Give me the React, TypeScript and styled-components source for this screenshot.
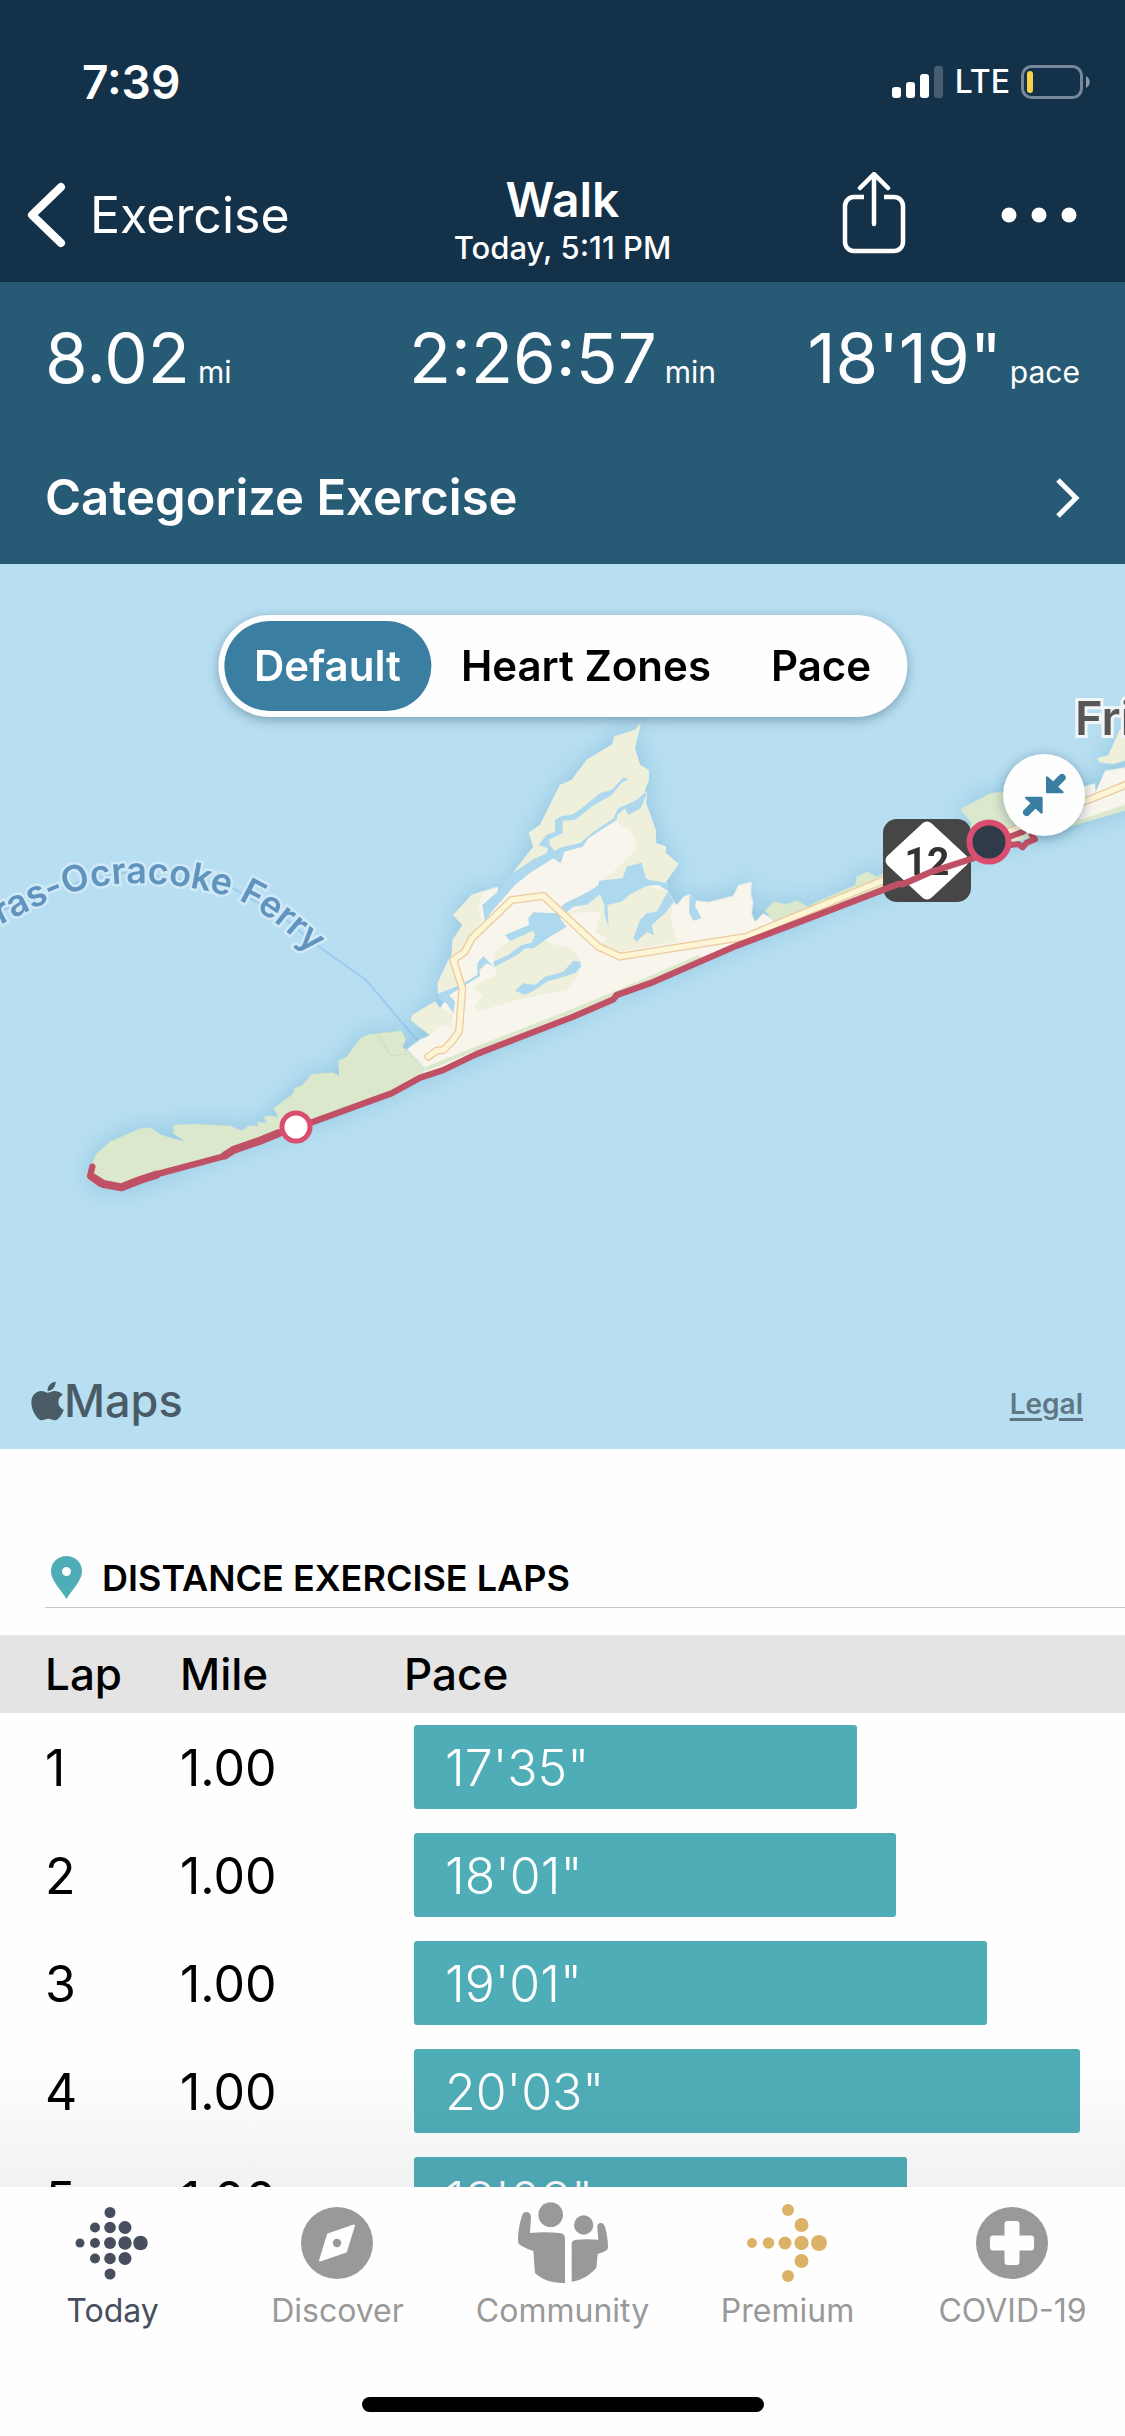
import React from "react";
import styled, { createGlobalStyle } from "styled-components";
import { FaApple } from "react-icons/fa";

const GlobalStyle = createGlobalStyle`
  * { box-sizing: border-box; }
  html, body, #root { height: 100%; }
  body {
    margin: 0;
    background: #fefefe;
    color: #000;
    font-family: Inter, "Noto Sans", sans-serif;
    -webkit-font-smoothing: antialiased;
  }
  button { font: inherit; color: inherit; background: none; border: 0; padding: 0; margin: 0; cursor: pointer; }
`;

const Screen = styled.div`
  display: flex;
  flex-direction: column;
  height: 100vh;
  overflow: hidden;
`;

const Header = styled.header`
  flex: none;
  background: #14314a;
  color: #fff;
`;

const StatusBar = styled.div`
  display: flex;
  align-items: center;
  justify-content: space-between;
  height: 164px;
  padding: 0 34px 0 82px;
`;

const Clock = styled.time`
  font-size: 46px;
  line-height: 52px;
  font-weight: 600;
`;

const StatusIcons = styled.div`
  display: flex;
  align-items: center;
  gap: 11px;
  font-size: 32px;
  line-height: 40px;
  font-weight: 500;
  svg { display: block; }
`;

const NavBar = styled.nav`
  display: grid;
  grid-template-columns: 1fr auto 1fr;
  align-items: start;
  height: 118px;
  padding: 0 26px;
`;

const BackButton = styled.button`
  display: flex;
  align-items: center;
  gap: 22px;
  height: 102px;
  justify-self: start;
  font-size: 50px;
  line-height: 60px;
`;

const Title = styled.h1`
  margin: 8px 0 0;
  text-align: center;
  font-size: 48px;
  line-height: 56px;
  font-weight: 600;
`;

const Subtitle = styled.p`
  margin: 2px 0 0;
  text-align: center;
  font-size: 31px;
  line-height: 36px;
  font-weight: 500;
`;

const NavActions = styled.div`
  display: flex;
  align-items: center;
  justify-content: flex-end;
  gap: 95px;
  height: 102px;
  padding-right: 22px;
  svg { display: block; }
`;

const Summary = styled.section`
  background: #275b75;
  color: #fff;
`;

const Metrics = styled.div`
  display: grid;
  grid-template-columns: 1fr auto 1fr;
  height: 150px;
  padding: 34px 45px 0;
`;

const Metric = styled.div`
  display: flex;
  align-items: baseline;
  justify-content: flex-start;
  gap: 8px;
  &:last-child { justify-content: flex-end; }
`;

const MetricValue = styled.span`
  font-size: 69px;
  line-height: 84px;
  font-weight: 400;
`;

const MetricUnit = styled.span`
  font-size: 30px;
  line-height: 36px;
  font-weight: 400;
`;

const CategorizeButton = styled.button`
  display: flex;
  align-items: center;
  justify-content: space-between;
  width: 100%;
  height: 132px;
  padding: 0 45px;
  font-size: 49px;
  line-height: 60px;
  font-weight: 600;
`;

const Content = styled.main`
  position: relative;
  flex: 1;
  min-height: 0;
  overflow: hidden;
`;

const ScrollFade = styled.div`
  position: absolute;
  left: 0;
  right: 0;
  bottom: 0;
  height: 120px;
  pointer-events: none;
  background: linear-gradient(rgba(40, 40, 70, 0), rgba(40, 40, 70, 0.06));
`;

const MapPanel = styled.section`
  position: relative;
  background: #b8dff1;
`;

const MapDrawing = styled.svg`
  display: block;
  width: 100%;
  height: auto;
`;

const Segments = styled.div`
  position: absolute;
  top: 51px;
  left: 50%;
  transform: translateX(-50%);
  display: flex;
  padding: 6px;
  border-radius: 51px;
  background: #fefefe;
  box-shadow: 0 3px 12px rgba(0, 40, 70, 0.35);
`;

const Segment = styled.button<{ $active?: boolean }>`
  height: 90px;
  padding: 0 30px;
  border-radius: 45px;
  font-size: 42px;
  line-height: 48px;
  font-weight: 600;
  white-space: nowrap;
  background: ${(p) => (p.$active ? "#3a7ea2" : "transparent")};
  color: ${(p) => (p.$active ? "#fff" : "#000")};
`;

const CollapseButton = styled.button`
  position: absolute;
  top: 190px;
  right: 40px;
  display: grid;
  place-items: center;
  width: 82px;
  height: 82px;
  border-radius: 50%;
  background: #fefefe;
  box-shadow: 0 2px 12px rgba(0, 40, 70, 0.35);
`;

const MapCredits = styled.div`
  position: absolute;
  left: 0;
  right: 0;
  bottom: 18px;
  display: flex;
  align-items: center;
  justify-content: space-between;
  padding: 0 42px 0 31px;
  color: #4a5b66;
`;

const MapBrand = styled.span`
  display: flex;
  align-items: center;
  font-size: 45px;
  line-height: 60px;
  font-weight: 500;
  svg { width: 33px; height: 44px; }
`;

const LegalLink = styled.a`
  padding-top: 6px;
  color: #5f7785;
  font-size: 28px;
  line-height: 36px;
  font-weight: 600;
  text-underline-offset: 4px;
  text-decoration-thickness: 3px;
`;

const SectionTitle = styled.h2`
  display: flex;
  align-items: center;
  gap: 20px;
  height: 60px;
  margin: 99px 0 27px 45px;
  padding-left: 6px;
  border-bottom: 1px solid #c8c8c8;
  font-size: 36px;
  line-height: 44px;
  font-weight: 600;
`;

const LapTable = styled.table`
  width: 100%;
  border-collapse: collapse;
  table-layout: fixed;
`;

const LapHead = styled.th<{ $width?: number }>`
  width: ${(p) => (p.$width ? `${p.$width}px` : "auto")};
  height: 78px;
  padding: 0;
  background: #e4e4e4;
  text-align: left;
  font-size: 44px;
  line-height: 52px;
  font-weight: 500;
  &:first-child { padding-left: 45px; }
`;

const LapCell = styled.td`
  height: 108px;
  padding: 2px 0 0;
  font-size: 50px;
  line-height: 60px;
  &:first-child { padding-left: 45px; }
`;

const PaceCell = styled(LapCell)`
  padding: 0 45px 0 10px;
`;

const PaceBar = styled.div`
  display: flex;
  align-items: center;
  height: 84px;
  padding: 2px 0 0 31px;
  border-radius: 3px;
  background: #4fadb7;
  color: #fff;
  font-weight: 300;
`;

const TabBar = styled.nav`
  flex: none;
  display: grid;
  grid-template-columns: repeat(5, 1fr);
  background: #fefefe;
`;

const Tab = styled.button<{ $active?: boolean }>`
  display: flex;
  flex-direction: column;
  align-items: center;
  height: 210px;
  padding-top: 8px;
  gap: 2px;
  color: ${(p) => (p.$active ? "#474f5e" : "#999")};
  font-size: 32px;
  line-height: 36px;
  font-weight: 400;
  svg { display: block; }
`;

const HomeIndicator = styled.div`
  flex: none;
  width: 402px;
  height: 15px;
  margin: 0 auto 24px;
  border-radius: 8px;
  background: #000;
`;

type Lap = { lap: number; mile: string; minutes: number; seconds: number };

const laps: Lap[] = [
  { lap: 1, mile: "1.00", minutes: 17, seconds: 35 },
  { lap: 2, mile: "1.00", minutes: 18, seconds: 1 },
  { lap: 3, mile: "1.00", minutes: 19, seconds: 1 },
  { lap: 4, mile: "1.00", minutes: 20, seconds: 3 },
  { lap: 5, mile: "1.00", minutes: 18, seconds: 8 },
];

const SLOWEST = 1203;
const BASELINE = 761;

const barWidth = (l: Lap) =>
  `${((l.minutes * 60 + l.seconds - BASELINE) / (SLOWEST - BASELINE)) * 100}%`;

const paceText = (l: Lap) => `${l.minutes}'${String(l.seconds).padStart(2, "0")}"`;

const SignalIcon = () => (
  <svg width="52" height="34" viewBox="0 0 52 34" fill="#fff" aria-hidden="true">
    <rect x="0" y="22" width="9" height="11" rx="3" />
    <rect x="14" y="17" width="9" height="16" rx="3" />
    <rect x="28" y="9" width="9" height="24" rx="3" />
    <rect x="42" y="1" width="9" height="32" rx="3" opacity=".22" />
  </svg>
);

const BatteryIcon = () => (
  <svg width="70" height="36" viewBox="0 0 70 36" aria-hidden="true">
    <rect x="1.5" y="2.5" width="59" height="31" rx="9" fill="none" stroke="#758798" strokeWidth="3" />
    <path d="M65 12c5 3 5 9 0 12z" fill="#8b99a6" />
    <rect x="6" y="7" width="6" height="22" rx="3" fill="#f6d345" />
  </svg>
);

const BackIcon = () => (
  <svg width="42" height="66" viewBox="0 0 42 66" fill="none" stroke="#fff" strokeWidth="8" strokeLinecap="round" strokeLinejoin="round" aria-hidden="true">
    <path d="M35 5L6 33l29 28" />
  </svg>
);

const ShareIcon = () => (
  <svg width="64" height="86" viewBox="0 0 64 86" fill="none" stroke="#fff" strokeWidth="4.5" aria-hidden="true">
    <path d="M22 25H12a9 9 0 0 0-9 9v36a9 9 0 0 0 9 9h40a9 9 0 0 0 9-9V34a9 9 0 0 0-9-9H42" />
    <path d="M32 52V3M18 16L32 2l14 14" strokeLinecap="round" strokeLinejoin="round" />
  </svg>
);

const MoreIcon = () => (
  <svg width="76" height="16" viewBox="0 0 76 16" fill="#fff" aria-hidden="true">
    <circle cx="8" cy="8" r="7.5" />
    <circle cx="38" cy="8" r="7.5" />
    <circle cx="68" cy="8" r="7.5" />
  </svg>
);

const ForwardIcon = () => (
  <svg width="26" height="42" viewBox="0 0 26 42" fill="none" stroke="#fff" strokeWidth="5" aria-hidden="true">
    <path d="M4 3l18 18L4 39" />
  </svg>
);

const CollapseIcon = () => (
  <svg width="46" height="46" viewBox="0 0 138 138" fill="#3a7ea2" stroke="#3a7ea2" strokeLinejoin="round" strokeLinecap="round" aria-hidden="true">
    <path d="M78 16v45h47L111 48 97 32z" strokeWidth="6" />
    <path d="M100 40l23-23" strokeWidth="22" />
    <path d="M62 122V77H15l14 13 14 16z" strokeWidth="6" />
    <path d="M40 98l-23 23" strokeWidth="22" />
  </svg>
);

const PinIcon = () => (
  <svg width="31" height="43" viewBox="0 0 31 43" aria-hidden="true">
    <path
      fill="#4fadb7"
      fillRule="evenodd"
      d="M15.500 0C7 0 0 6.500 0 15c0 10 9 17 15.500 28C22 32 31 25 31 15 31 6.500 24 0 15.500 0zm0 11a4.500 4.500 0 1 1 0 9 4.500 4.500 0 0 1 0-9z"
    />
  </svg>
);

const todayDots = [
  [9, 36, 4.5], [24, 20.500, 5], [24, 36, 5], [24, 51.500, 5],
  [39, 5.500, 5.500], [39, 20.500, 5.800], [39, 36, 6], [39, 51.500, 5.800], [39, 67, 5.500],
  [54, 20.500, 6.500], [54, 36, 6.700], [54, 51.500, 6.500], [69.500, 36, 7.300],
];

const premiumDots = [
  [6, 36, 5], [22.500, 36, 5.800], [39, 36, 6.500], [55.500, 36, 7.200], [73, 36, 8],
  [42, 3, 6], [55.500, 18, 7], [55.500, 54, 7], [42, 69, 6],
];

const DotIcon = ({ dots, color }: { dots: number[][]; color: string }) => (
  <svg width="82" height="96" viewBox="1 -12 82 96" fill={color} aria-hidden="true">
    {dots.map(([cx, cy, r]) => (
      <circle key={`${cx}-${cy}`} cx={cx} cy={cy} r={r} />
    ))}
  </svg>
);

const DiscoverIcon = () => (
  <svg width="74" height="96" viewBox="0 -12 74 96" aria-hidden="true">
    <circle cx="36" cy="36" r="36" fill="#999" />
    <path d="M27 27.500L53 18.500 45 44.500 19 53.500z" fill="#fefefe" stroke="#fefefe" strokeWidth="2" strokeLinejoin="round" />
    <circle cx="36" cy="36" r="4.200" fill="#999" />
  </svg>
);

const CommunityIcon = () => (
  <svg width="120" height="96" viewBox="6 15 360 288" fill="#999" aria-hidden="true">
    <circle cx="149" cy="74" r="37" />
    <circle cx="248" cy="105" r="29" />
    <path d="M76 66c9 0 14 6 14 16l-3 47c30-3 60-3 88 0 12 1 17 6 17 18v132c-40 1-68-10-90-30l-5-66c-16-5-28-11-39-18-7-4-7-9-7-20 1-25 5-46 11-65 3-10 7-14 14-14z" />
    <path d="M300 99c-8 0-12 6-11 14l3 36c-22-2-46-2-64 0-12 1-16 5-16 16v110c34-5 56-22 74-42l4-41c10-3 17-6 24-10 6-3 7-7 7-15-1-22-4-38-8-53-3-10-6-15-13-15z" />
  </svg>
);

const CovidIcon = () => (
  <svg width="74" height="96" viewBox="0 -12 74 96" aria-hidden="true">
    <circle cx="36" cy="36" r="36" fill="#999" />
    <rect x="28.500" y="14" width="15" height="44" rx="3" fill="#fefefe" />
    <rect x="14" y="28.500" width="44" height="15" rx="3" fill="#fefefe" />
  </svg>
);

const WALK_ROUTE =
  "M-923 1400L-930 1428-900 1450-835 1462-780 1440-720 1420-525 1368-500 1348-420 1322-360 1298-260 1265-25 1180 60 1133 130 1110 230 1062 520 950 640 898 650 885 750 850 1010 737 1200 665 1495 552 1510 552 1590 517 1720 475";

const ISLAND_ROAD =
  "M85 1070L110 1052 130 1050 155 1025 177 995 187 865 160 780 195 755 215 715 335 600 430 588 595 740 660 770 1040 710 1140 668 1440 545 1580 485 1840 390 2040 310 2140 270 2200 245";

const RouteMap = () => (
  <MapDrawing viewBox="0 564 1125 885" role="img" aria-label="Map of the walk along the shore">
    <rect x="0" y="564" width="1125" height="885" fill="#b8dff1" />

    {/* Ferry line */}
    <g transform="translate(0 820) scale(0.33333)" fill="none" stroke="#9dccf1" strokeWidth="6">
      <path d="M-10 280L60 245 240 185 380 157 560 180 700 205 860 300 940 368 1098 480 1255 665" />
    </g>

    <g style={{ filter: "drop-shadow(0 0 12px rgba(110, 175, 210, 0.55))" }}>
      {/* Southern spit */}
      <g transform="translate(0 820) scale(0.33333)" fill="#dbe8cb">
        <path d="M258 1065L290 1000 330 965 420 925 450 922 485 945 555 965 520 940 520 915 580 912 690 917 725 932 745 917 775 918 770 905 800 908 790 890 810 887 835 890 820 865 878 822 885 803 905 798 935 762 1000 757 1017 768 1015 722 1040 710 1080 655 1105 643 1205 632 1218 660 1207 680 1225 695 1275 745 1260 775 1175 820 880 930 690 990 460 1078 365 1105 310 1105 265 1080z" />
      </g>
      {/* Village and marshes */}
      <g transform="translate(400 700) scale(0.33333)">
        <path
          fill="#f8f5ec"
          d="M722 70L704 145 720 195 746 210 746 240 725 280 740 275 738 310 767 390 768 430 798 440 796 458 835 492 798 545 803 575 820 600 830 615 850 590 870 582 885 600 925 606 1000 587 1015 555 1055 545 1053 585 1060 605 1055 640 1065 665 1090 640 1115 655 1200 630 1200 670 1010 740 750 850 650 885 520 950 230 1065 130 1115 60 1135 75 1105 20 1048 60 1018 90 1005 33 960 37 945 105 905 120 925 135 900 115 880 113 850 145 780 155 765 158 720 188 675 160 645 215 585 250 573 293 560 293 580 275 625 340 555 340 518 400 440 387 398 420 375 480 255 515 240 560 180 637 133 643 110 705 90z"
        />
      </g>
      {/* North-eastern strip */}
      <g transform="translate(780 680) scale(0.33333)">
        <path fill="#dbe8cb" d="M-45 692L-20 665 20 672 50 662 85 680 110 665 225 615 230 590 262 575 290 590 330 570 560 480 575 430 540 388 630 340 700 330 900 350 1060 330 1060 385 870 440 760 470 560 530 0 750z" />
        <path fill="#f8f5ec" d="M870 330L945 310 947 335 975 272 1060 258 1060 365 900 420z" />
        <path fill="#eef0dc" d="M950 235L985 225 1018 150 1060 130 1060 235 1000 252 960 248z" />
      </g>
    </g>

    <path d="M378 1035L391 1056 407 1054" fill="none" stroke="#cdd9bd" strokeWidth="1" />

    <g transform="translate(400 700) scale(0.33333)">
      <g fill="#eef0dc">
        <path d="M722 70L704 145 720 195 746 210 746 240 725 300 640 350 550 425 460 475 340 518 400 440 387 398 420 375 480 255 515 240 560 180 637 133 643 110 705 90z" />
        <path d="M650 345L740 275 738 310 767 390 768 430 798 440 796 458 835 492 798 545 740 545 610 540 680 480 712 440 695 395 655 370z" />
        <path d="M615 600L665 600 690 583 740 558 803 572 820 605 810 650 830 725 665 755 600 740 620 710 585 700 605 635 500 640 560 615 600 583z" />
        <path d="M215 585L160 645 188 675 158 720 155 765 175 765 210 710 245 660 235 620 250 573z" />
        <path d="M285 760L300 740 370 700 400 692 410 710 450 730 515 745 545 785 530 830 500 870 370 895 240 932 222 920 250 890 215 860 290 825 280 785z" />
        <path d="M145 780L113 850 115 880 130 880 185 855 175 800z" />
        <path d="M37 945L105 905 120 925 160 945 155 985 125 972 90 1005 33 960z" />
      </g>
      <path d="M75 1108L230 1045 520 932 640 882 900 770" fill="none" stroke="#dbe8cb" strokeWidth="12" />
      <g fill="#aed8ed">
        <path d="M670 232L685 238 665 248 635 285 575 320 525 360 488 362 487 400 450 418 447 432 463 452 490 440 540 430 575 400 640 355 655 325 710 300 735 278 740 280 722 325 685 345 675 325 652 345 650 360 565 415 548 440 493 455 482 490 460 475 395 515 345 555 275 635 255 665 247 615 293 575 340 518 400 478 440 460 445 445 415 435 440 405 465 395 465 360 485 348 515 345 545 325 600 280 635 270z" />
        <path d="M805 550L750 540 738 535 725 488 680 500 668 535 597 542 595 555 565 575 495 610 465 640 400 637 385 655 387 675 315 705 330 723 400 692 405 705 395 728 365 735 325 765 280 785 285 800 360 760 375 745 400 745 450 710 500 680 480 655 520 620 560 615 600 583 613 615 615 650 626 678 622 615 665 605 690 583 740 558 775 555 803 572z" />
        <path d="M700 715L720 660 740 640 770 635 803 575 822 605 795 640 755 675 762 705 740 697 710 725z" />
        <path d="M868 586L890 598 885 618 905 655 880 662 868 640z" />
        <path d="M345 872L370 850 405 855 435 830 490 815 520 782 540 785 543 800 525 820 440 845 405 870 375 885z" />
        <path d="M112 882L180 855 232 825 232 790 250 768 270 790 285 800 260 790 238 810 240 828 148 885 165 905 160 940 140 910 120 900z" />
      </g>
      <path d={ISLAND_ROAD} fill="none" stroke="#eccaa3" strokeWidth="24" strokeLinecap="round" strokeLinejoin="round" />
      <path d={ISLAND_ROAD} fill="none" stroke="#fdf6d4" strokeWidth="16" strokeLinecap="round" strokeLinejoin="round" />
    </g>

    {/* State route shield */}
    <rect x="883" y="819" width="88" height="83" rx="14" fill="#464646" />
    <path d="M927 828L962 860.500 927 893 892 860.500z" fill="#fff" stroke="#fff" strokeWidth="13" strokeLinejoin="round" />
    <text x="927" y="875" textAnchor="middle" fontFamily="Roboto, sans-serif" fontSize="39" fontWeight="700" fill="#333">
      12
    </text>

    {/* Walked route */}
    <g transform="translate(400 700) scale(0.33333)" fill="none" stroke="#c05065" strokeLinecap="round" strokeLinejoin="round">
      <path d={WALK_ROUTE} strokeWidth="19" />
      <path d="M-925 1430L-890 1452-835 1462-780 1440-730 1424M-525 1366L-500 1350-420 1322-365 1300" strokeWidth="24" />
      <path d="M1790 425L1870 395M1810 438L1855 432 1868 442 1880 428 1905 418 1895 405" strokeWidth="18" />
    </g>
    <circle cx="296" cy="1127" r="14" fill="#fff" stroke="#d94d70" strokeWidth="5" />
    <circle cx="989" cy="842" r="19.500" fill="#303b49" stroke="#d94d70" strokeWidth="6" />

    {/* Place and ferry labels */}
    <path id="ferry-label" d="M-180 1036C-110 980 -50 945 0 925C40 905 70 890 100 886C140 880 180 884 225 895C258 905 285 930 312 954" fill="none" />
    <text fontFamily="Inter, sans-serif" fontSize="36" fontWeight="600" fill="#6094bf" stroke="#d0e9f7" strokeWidth="5" paintOrder="stroke" textAnchor="end">
      <textPath href="#ferry-label" startOffset="100%">
        Hatteras-Ocracoke Ferry
      </textPath>
    </text>
    <text x="1075" y="735" fontFamily="Inter, sans-serif" fontSize="47" fontWeight="600" fill="#575757" stroke="#f2f6f8" strokeWidth="6" paintOrder="stroke">
      Frisco
    </text>
  </MapDrawing>
);

const tabs = [
  { label: "Today", icon: <DotIcon dots={todayDots} color="#474f5e" />, active: true },
  { label: "Discover", icon: <DiscoverIcon /> },
  { label: "Community", icon: <CommunityIcon /> },
  { label: "Premium", icon: <DotIcon dots={premiumDots} color="#dcb269" /> },
  { label: "COVID-19", icon: <CovidIcon /> },
];

export default function App() {
  return (
    <Screen>
      <GlobalStyle />
      <Header>
        <StatusBar>
          <Clock>7:39</Clock>
          <StatusIcons>
            <SignalIcon />
            <span>LTE</span>
            <BatteryIcon />
          </StatusIcons>
        </StatusBar>
        <NavBar>
          <BackButton type="button">
            <BackIcon />
            Exercise
          </BackButton>
          <div>
            <Title>Walk</Title>
            <Subtitle>Today, 5:11 PM</Subtitle>
          </div>
          <NavActions>
            <button type="button" aria-label="Share">
              <ShareIcon />
            </button>
            <button type="button" aria-label="More">
              <MoreIcon />
            </button>
          </NavActions>
        </NavBar>
      </Header>

      <Content>
        <Summary>
          <Metrics>
            <Metric>
              <MetricValue>8.02</MetricValue>
              <MetricUnit>mi</MetricUnit>
            </Metric>
            <Metric>
              <MetricValue>2:26:57</MetricValue>
              <MetricUnit>min</MetricUnit>
            </Metric>
            <Metric>
              <MetricValue>18'19"</MetricValue>
              <MetricUnit>pace</MetricUnit>
            </Metric>
          </Metrics>
          <CategorizeButton type="button">
            Categorize Exercise
            <ForwardIcon />
          </CategorizeButton>
        </Summary>

        <MapPanel>
          <RouteMap />
          <Segments>
            <Segment type="button" $active>
              Default
            </Segment>
            <Segment type="button">Heart Zones</Segment>
            <Segment type="button">Pace</Segment>
          </Segments>
          <CollapseButton type="button" aria-label="Collapse map">
            <CollapseIcon />
          </CollapseButton>
          <MapCredits>
            <MapBrand>
              <FaApple aria-hidden="true" />
              Maps
            </MapBrand>
            <LegalLink href="#legal">Legal</LegalLink>
          </MapCredits>
        </MapPanel>

        <SectionTitle>
          <PinIcon />
          DISTANCE EXERCISE LAPS
        </SectionTitle>
        <LapTable>
          <thead>
            <tr>
              <LapHead $width={180}>Lap</LapHead>
              <LapHead $width={224}>Mile</LapHead>
              <LapHead>Pace</LapHead>
            </tr>
          </thead>
          <tbody>
            {laps.map((l) => (
              <tr key={l.lap}>
                <LapCell>{l.lap}</LapCell>
                <LapCell>{l.mile}</LapCell>
                <PaceCell>
                  <PaceBar style={{ width: barWidth(l) }}>{paceText(l)}</PaceBar>
                </PaceCell>
              </tr>
            ))}
          </tbody>
        </LapTable>
        <ScrollFade />
      </Content>

      <TabBar>
        {tabs.map((t) => (
          <Tab key={t.label} type="button" $active={t.active}>
            {t.icon}
            {t.label}
          </Tab>
        ))}
      </TabBar>
      <HomeIndicator />
    </Screen>
  );
}
